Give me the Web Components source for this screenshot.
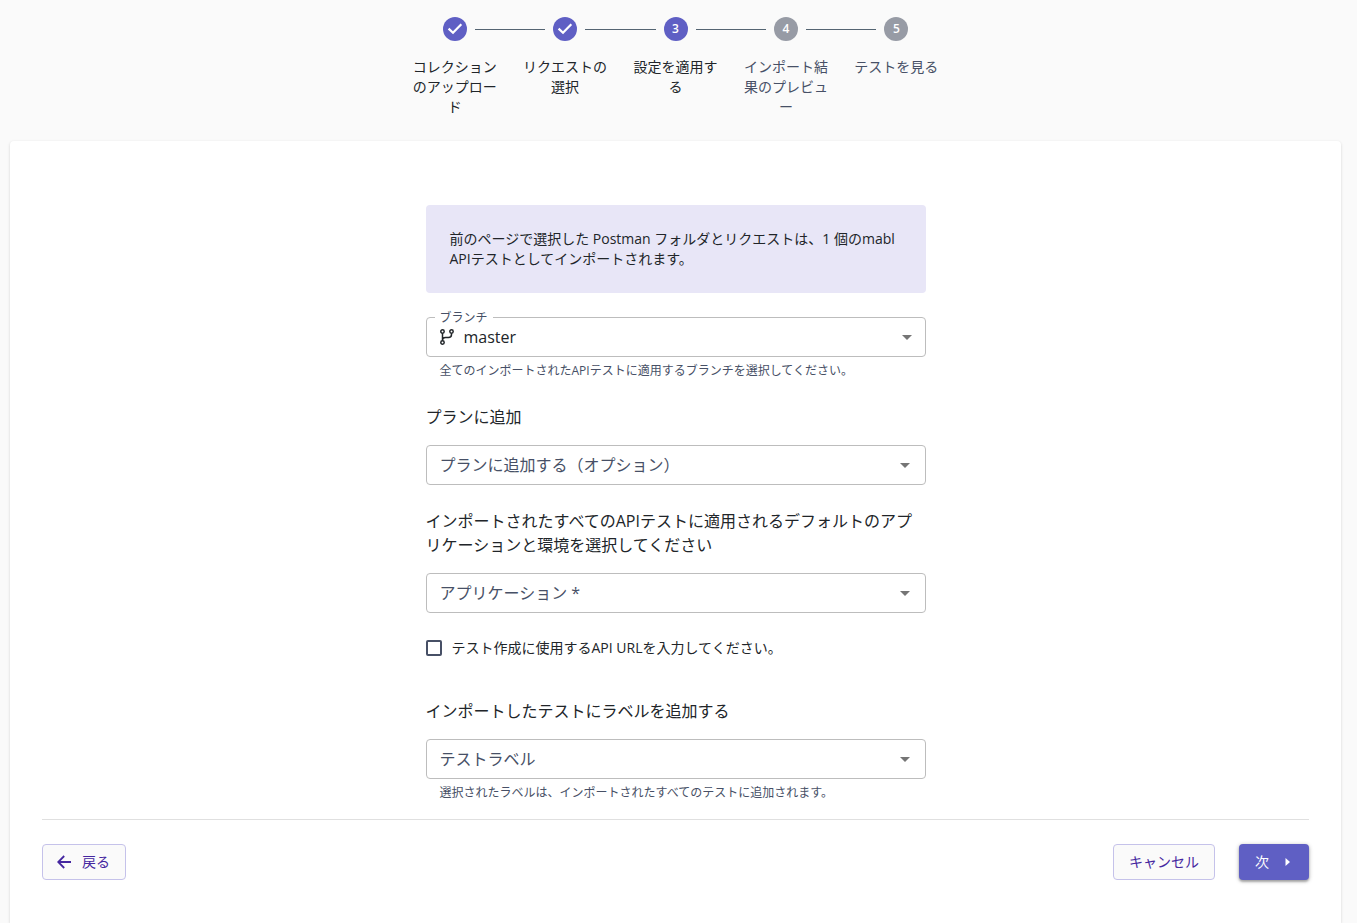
<!DOCTYPE html>
<html lang="ja">
<head>
<meta charset="utf-8">
<meta name="viewport" content="width=device-width, initial-scale=1">
<title>インポート</title>
<style>
    body {
        margin: 0;
        background: #fafafa;
        color: #212529;
        font-family: "Open Sans", "Noto Sans CJK JP", sans-serif;
        font-size: 14px;
        line-height: 20px;
    }
</style>
</head>
<body>
<import-page></import-page>

<script>
function makeTemplate(html) {
    const template = document.createElement('template');
    template.innerHTML = html;
    return template;
}

class BaseElement extends HTMLElement {
    constructor() {
        super();
        this.attachShadow({mode: 'open'});
        this.shadowRoot.appendChild(this.constructor.template.content.cloneNode(true));
    }
    $(selector) {
        return this.shadowRoot.querySelector(selector);
    }
}

// one step: state is "done", "active" or "todo"
class WizardStep extends BaseElement {
    static template = makeTemplate(`
        <style>
            :host {
                flex: 1 1 0;
                min-width: 0;
                text-align: center;
            }
            .track {
                display: flex;
                align-items: center;
                height: 24px;
                gap: 8px;
            }
            .line {
                flex: 1;
                height: 1px;
                background: #546472;
            }
            :host(:first-of-type) .line.before,
            :host(:last-of-type) .line.after {
                background: none;
            }
            .dot {
                display: flex;
                align-items: center;
                justify-content: center;
                width: 24px;
                height: 24px;
                border-radius: 50%;
                background: #979ba5;
                color: #fff;
                font-size: 12px;
                font-weight: 600;
            }
            :host([state=done]) .dot,
            :host([state=active]) .dot {
                background: #5f5fc4;
            }
            svg {
                display: none;
            }
            :host([state=done]) svg {
                display: block;
            }
            :host([state=done]) .num {
                display: none;
            }
            .label {
                padding: 0 8px;
                margin-top: 16px;
                color: #475066;
                line-break: anywhere;
            }
            :host([state=done]) .label,
            :host([state=active]) .label {
                color: #212529;
            }
        </style>
        <div class="track">
            <span class="line before"></span>
            <span class="dot">
                <svg width="24" height="24" viewBox="0 0 24 24" fill="none" stroke="#fff" stroke-width="2.2"><path d="M5.6 11.6l4.4 4.2 8.3-8.6"/></svg>
                <span class="num"></span>
            </span>
            <span class="line after"></span>
        </div>
        <div class="label"><slot></slot></div>
    `);
    connectedCallback() {
        this.$('.num').textContent = this.getAttribute('number');
    }
}

class WizardStepper extends BaseElement {
    static template = makeTemplate(`
        <style>
            :host {
                display: flex;
                width: 100%;
                max-width: 552px;
                margin: 0 auto;
            }
        </style>
        <slot></slot>
    `);
}

class InfoBanner extends BaseElement {
    static template = makeTemplate(`
        <style>
            :host {
                display: block;
                padding: 24px;
                border-radius: 4px;
                background: #e8e6f7;
            }
        </style>
        <slot></slot>
    `);
}

// heading + drop-down + helper text; "floating" puts the label on the border
class SelectField extends BaseElement {
    static template = makeTemplate(`
        <style>
            :host {
                display: block;
            }
            label {
                display: block;
                margin-bottom: 16px;
                font-size: 16px;
                line-height: 24px;
            }
            .control {
                display: grid;
                position: relative;
                align-items: center;
            }
            select, .arrow, .icon {
                grid-area: 1 / 1;
            }
            select {
                appearance: none;
                width: 100%;
                height: 40px;
                margin: 0;
                padding: 0 32px 0 13px;
                border: 1px solid #bdbdbd;
                border-radius: 4px;
                background: #fff;
                color: #475066;
                font: inherit;
                font-size: 16px;
                line-height: 24px;
            }
            .arrow {
                justify-self: end;
                margin-right: 9px;
                pointer-events: none;
            }
            .icon {
                justify-self: start;
                margin-left: 14px;
                pointer-events: none;
            }
            .icon:empty, .help:empty {
                display: none;
            }
            .help {
                margin: 4px 14px 0;
                color: #475066;
                font-size: 12px;
            }
            :host([floating]) label {
                position: absolute;
                z-index: 1;
                top: -9px;
                left: 9px;
                margin: 0;
                padding: 0 5px;
                background: #fff;
                color: #475066;
                font-size: 12px;
                line-height: 20px;
            }
            :host([floating]) select {
                padding-left: 37px;
                color: #212529;
            }
            :host([floating]) .arrow {
                margin-right: 7px;
            }
        </style>
        <label for="control"></label>
        <div class="control">
            <select id="control"><option></option></select>
            <span class="icon"></span>
            <svg class="arrow" width="24" height="24" viewBox="0 0 24 24" fill="#757575"><path d="M7 10l5 5 5-5z"/></svg>
        </div>
        <div class="help"></div>
    `);
    static branchIcon = `
        <svg style="display:block" width="16" height="18" viewBox="0 0 16 18" fill="none" stroke="#212529" stroke-width="1.5">
            <circle cx="2.5" cy="3.5" r="1.7"/>
            <circle cx="11.5" cy="3.5" r="1.7"/>
            <circle cx="2.5" cy="14.5" r="1.7"/>
            <path d="M2.5 5.2v7.6M11.5 5.2v1.3q0 3-3 3h-3q-3 0-3 2.5"/>
        </svg>`;
    connectedCallback() {
        this.$('label').textContent = this.getAttribute('label');
        this.$('option').textContent = this.getAttribute('value');
        this.$('.help').textContent = this.getAttribute('help') || '';
        if (this.hasAttribute('floating')) {
            this.$('.control').prepend(this.$('label'));
            this.$('.icon').innerHTML = SelectField.branchIcon;
        }
    }
}

class CheckField extends BaseElement {
    static template = makeTemplate(`
        <style>
            :host {
                display: block;
            }
            label {
                display: flex;
                align-items: center;
                gap: 10px;
            }
            input {
                appearance: none;
                width: 16px;
                height: 16px;
                margin: 0;
                border: 2px solid #475066;
                border-radius: 2px;
            }
            input:checked {
                background: #5f5fc4;
            }
        </style>
        <label><input type="checkbox"><span><slot></slot></span></label>
    `);
}

class ActionButton extends BaseElement {
    static template = makeTemplate(`
        <style>
            :host {
                display: block;
            }
            button {
                display: flex;
                align-items: center;
                height: 36px;
                padding: 0 15px;
                border: 1px solid #c5c2ea;
                border-radius: 4px;
                background: #fafafa;
                color: #4527a0;
                font: inherit;
                cursor: pointer;
            }
            :host([primary]) button {
                padding: 0 16px;
                border: 0;
                background: #5f5fc4;
                color: #fff;
                box-shadow: 0 1px 4px rgba(0, 0, 0, .3), 0 2px 2px rgba(0, 0, 0, .2);
            }
        </style>
        <button type="button"><slot name="start"></slot><slot></slot><slot name="end"></slot></button>
    `);
}

class ImportPage extends BaseElement {
    static template = makeTemplate(`
        <style>
            :host {
                display: flex;
                flex-direction: column;
                box-sizing: border-box;
                min-height: 100vh;
                padding: 17px 16px 0 10px;
            }
            main {
                flex: 1;
                margin-top: 24px;
                padding: 64px 32px 32px;
                border-radius: 4px 4px 0 0;
                background: #fff;
                box-shadow: 0 1px 3px rgba(0, 0, 0, .16);
            }
            form {
                display: flex;
                flex-direction: column;
                gap: 24px;
                max-width: 500px;
                margin: 0 auto;
            }
            check-field {
                margin: 1px 0 17px;
            }
            footer {
                display: flex;
                gap: 24px;
                margin-top: 16px;
                padding-top: 24px;
                border-top: 1px solid #e0e0e0;
            }
            .back {
                margin-right: auto;
            }
            svg {
                display: block;
            }
            .back svg {
                margin: 0 11px 0 -1px;
            }
            .next svg {
                margin-left: 8px;
                margin-right: -6px;
            }
        </style>
        <wizard-stepper>
            <wizard-step number="1" state="done">コレクションのアップロード</wizard-step>
            <wizard-step number="2" state="done">リクエストの選択</wizard-step>
            <wizard-step number="3" state="active">設定を適用する</wizard-step>
            <wizard-step number="4" state="todo">インポート結果のプレビュー</wizard-step>
            <wizard-step number="5" state="todo">テストを見る</wizard-step>
        </wizard-stepper>
        <main>
            <form>
                <info-banner>前のページで選択した Postman フォルダとリクエストは、1 個のmabl APIテストとしてインポートされます。</info-banner>
                <select-field floating label="ブランチ" value="master" help="全てのインポートされたAPIテストに適用するブランチを選択してください。"></select-field>
                <select-field label="プランに追加" value="プランに追加する（オプション）"></select-field>
                <select-field label="インポートされたすべてのAPIテストに適用されるデフォルトのアプリケーションと環境を選択してください" value="アプリケーション *"></select-field>
                <check-field>テスト作成に使用するAPI URLを入力してください。</check-field>
                <select-field label="インポートしたテストにラベルを追加する" value="テストラベル" help="選択されたラベルは、インポートされたすべてのテストに追加されます。"></select-field>
            </form>
            <footer>
                <action-button class="back">
                    <svg slot="start" width="14" height="14" viewBox="0 0 14 14" fill="none" stroke="#4527a0" stroke-width="1.8"><path d="M14 7H1.5M7.2 1L1.2 7l6 6"/></svg>戻る</action-button>
                <action-button>キャンセル</action-button>
                <action-button primary class="next">次<svg slot="end" width="22" height="22" viewBox="0 0 22 22" fill="#fff"><path d="M8.5 7v8l4.5-4z"/></svg></action-button>
            </footer>
        </main>
    `);
}

customElements.define('wizard-step', WizardStep);
customElements.define('wizard-stepper', WizardStepper);
customElements.define('info-banner', InfoBanner);
customElements.define('select-field', SelectField);
customElements.define('check-field', CheckField);
customElements.define('action-button', ActionButton);
customElements.define('import-page', ImportPage);
</script>
</body>
</html>
